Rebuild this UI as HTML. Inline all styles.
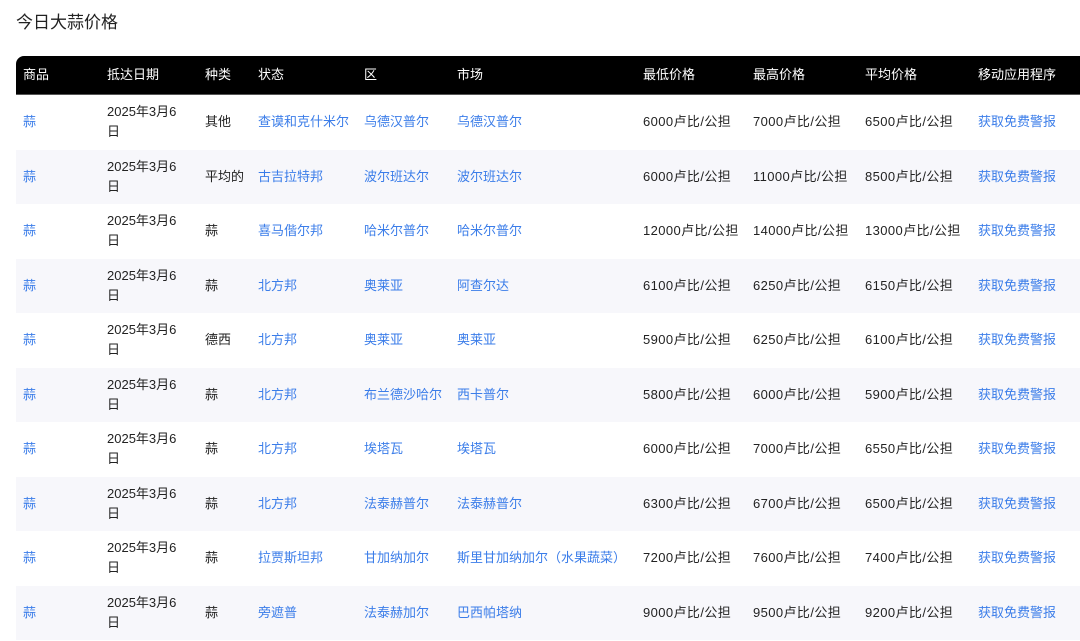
<!DOCTYPE html>
<html><head><meta charset="utf-8"><style>
body{margin:0;width:1080px;height:641px;overflow:hidden;background:#fff;font-family:"Liberation Sans","Noto Sans CJK SC",sans-serif;font-size:13px;color:#222;}
h1{position:absolute;left:16px;top:10px;margin:0;font-size:17px;font-weight:normal;color:#222;line-height:26px}
.hd{position:absolute;left:16px;top:56px;width:1080px;height:39px;background:#000;border-top-left-radius:8px;border-bottom:1px solid #555;box-sizing:border-box}
.hd span{position:absolute;top:0;line-height:38px;color:#fff;font-size:13px}
.r{position:absolute;left:16px;width:1080px;height:54.5px}
.r.alt{background:#f7f7fb}
.r span{position:absolute;top:0;height:54.5px;display:flex;align-items:center;line-height:20px}
.b{color:#3b7de9}
.p{letter-spacing:0.4px}
</style></head><body>
<h1>今日大蒜价格</h1>
<div class="hd">
<span style="left:7px">商品</span><span style="left:91px">抵达日期</span><span style="left:189px">种类</span><span style="left:242px">状态</span><span style="left:348px">区</span><span style="left:441px">市场</span><span style="left:627px">最低价格</span><span style="left:737px">最高价格</span><span style="left:849px">平均价格</span><span style="left:962px">移动应用程序</span>
</div>
<div id="rows"></div>
<script>
var d=[["其他","查谟和克什米尔","乌德汉普尔","乌德汉普尔","6000","7000","6500"],
["平均的","古吉拉特邦","波尔班达尔","波尔班达尔","6000","11000","8500"],
["蒜","喜马偕尔邦","哈米尔普尔","哈米尔普尔","12000","14000","13000"],
["蒜","北方邦","奥莱亚","阿查尔达","6100","6250","6150"],
["德西","北方邦","奥莱亚","奥莱亚","5900","6250","6100"],
["蒜","北方邦","布兰德沙哈尔","西卡普尔","5800","6000","5900"],
["蒜","北方邦","埃塔瓦","埃塔瓦","6000","7000","6550"],
["蒜","北方邦","法泰赫普尔","法泰赫普尔","6300","6700","6500"],
["蒜","拉贾斯坦邦","甘加纳加尔","斯里甘加纳加尔（水果蔬菜）","7200","7600","7400"],
["蒜","旁遮普","法泰赫加尔","巴西帕塔纳","9000","9500","9200"]];
var h="";
d.forEach(function(r,i){
var t=95+i*54.5;
h+='<div class="r'+(i%2?' alt':'')+'" style="top:'+t+'px">'+
'<span class="b" style="left:7px">蒜</span>'+
'<span style="left:91px">2025年3月6<br>日</span>'+
'<span style="left:189px">'+r[0]+'</span>'+
'<span class="b" style="left:242px">'+r[1]+'</span>'+
'<span class="b" style="left:348px">'+r[2]+'</span>'+
'<span class="b" style="left:441px">'+r[3]+'</span>'+
'<span class="p" style="left:627px">'+r[4]+'卢比/公担</span>'+
'<span class="p" style="left:737px">'+r[5]+'卢比/公担</span>'+
'<span class="p" style="left:849px">'+r[6]+'卢比/公担</span>'+
'<span class="b" style="left:962px">获取免费警报</span></div>';
});
document.getElementById("rows").innerHTML=h;
</script>
</body></html>
